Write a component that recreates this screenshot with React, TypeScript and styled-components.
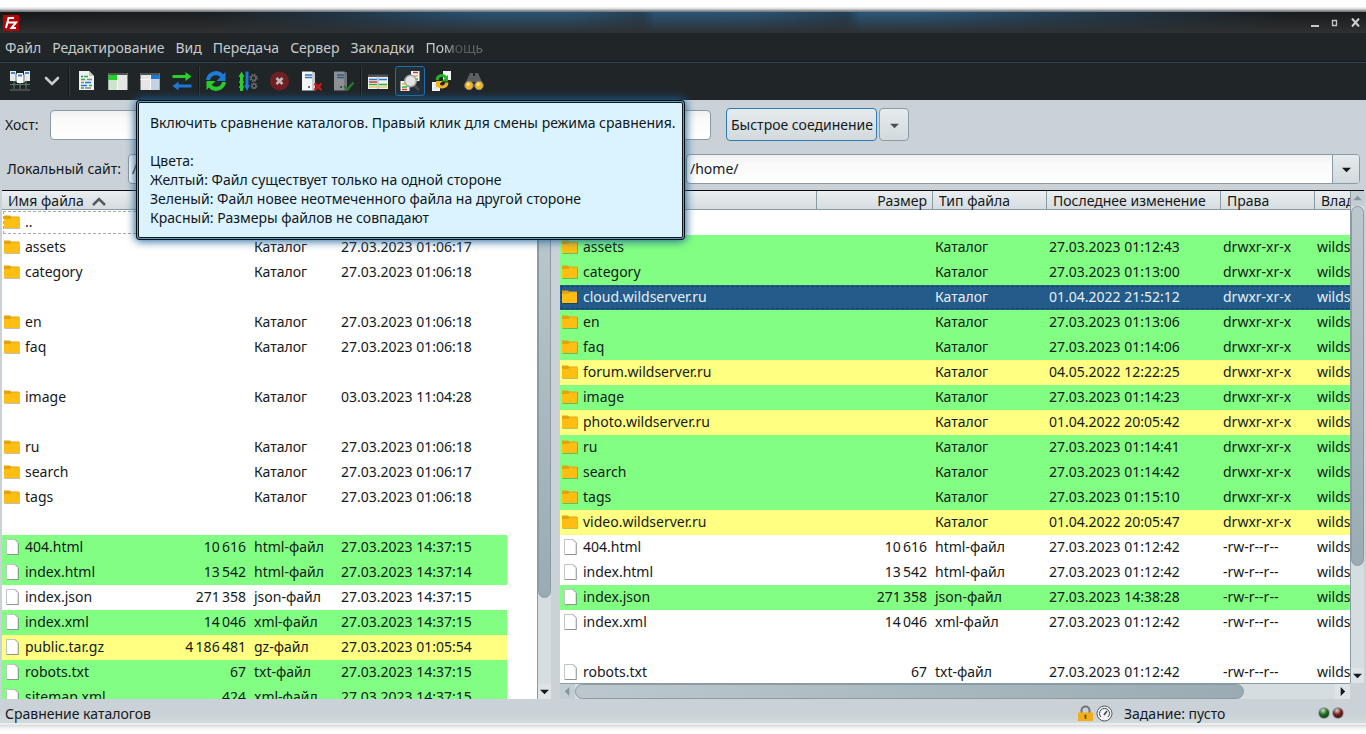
import React from 'react';
import styled, { createGlobalStyle, css } from 'styled-components';

const GlobalStyle = createGlobalStyle`
  *, *::before, *::after { box-sizing: border-box; }
  body {
    margin: 0;
    background: #ffffff;
    color: #14191c;
    font-family: "Noto Sans", "Open Sans", sans-serif;
    font-size: 14px;
    line-height: 19px;
  }
  button, input { font: inherit; color: inherit; margin: 0; }
`;

const edge = '#8a9ba3';
const face = '#cad2d8';

/* ---------- window frame ---------- */

const Window = styled.div`
  display: flex;
  flex-direction: column;
  height: 100vh;
  min-height: 400px;
  overflow: hidden;
  background: ${face};
`;

const TopFade = styled.div`
  flex: none;
  height: 12px;
  background: linear-gradient(#ffffff 0 55%, #d8d8d8 75%, #7c7c7c 92%, #6d8594 100%);
`;

const BottomFade = styled.div`
  flex: none;
  height: 11px;
  background: linear-gradient(#e6eaec 0, #f2f4f5 10%, #d9dcdd 20%, #f2f2f2 45%, #ffffff 75%);
`;

const TitleBar = styled.header`
  flex: none;
  display: flex;
  align-items: center;
  height: 21px;
  padding: 0 3px;
  background:
    linear-gradient(rgba(46, 46, 46, 0), #2e3031),
    linear-gradient(
      to right,
      #161616 0, #1b1e20 15%, #1e3546 25%, #234a68 32%, #285475 36%, #285373 42%, #243f54 47%,
      #28567a 48%, #285475 55%, #223e54 62%, #2a587b 63%, #28567a 68%, #224058 76%, #1d2e3a 85%, #181a1b 95%
    );
`;

const Logo = styled.svg`
  display: block;
`;

const WindowButtons = styled.div`
  display: flex;
  margin-left: auto;
  gap: 4px;
`;

const WindowButton = styled.button`
  display: flex;
  width: 16px;
  height: 16px;
  padding: 0;
  border: 0;
  background: none;
  align-items: center;
  justify-content: center;
`;

const MenuBar = styled.nav`
  flex: none;
  display: flex;
  gap: 11px;
  height: 29px;
  padding: 4px 5px 0;
  background: #202527;
  border-bottom: 1px solid #15191b;
`;

const MenuItem = styled.button<{ $faded?: boolean }>`
  height: 20px;
  padding: 0;
  border: 0;
  background: none;
  color: #c6cbce;
  ${p => p.$faded && css`
    mask-image: linear-gradient(to right, #000 20px, rgba(0, 0, 0, 0.3) 32px, rgba(0, 0, 0, 0.4));
  `}
`;

const ToolBar = styled.div`
  flex: none;
  display: flex;
  align-items: center;
  height: 38px;
  padding: 0 4px 2px;
  background: #202527;
  border-top: 1px solid #33434f;
`;

const ToolSlot = styled.div`
  position: relative;
  width: 32px;
  display: flex;
  justify-content: center;
`;

const ToolButton = styled.button<{ $active?: boolean }>`
  display: flex;
  align-items: center;
  justify-content: center;
  width: 30px;
  height: 30px;
  padding: 0;
  border: 1px solid ${p => (p.$active ? '#1f6fb2' : 'transparent')};
  border-radius: 3px;
  background: ${p => (p.$active ? '#232e35' : 'none')};
`;

const Separator = styled.span`
  width: 2px;
  height: 30px;
  background: linear-gradient(to right, #14181a 50%, #33383b 50%);
`;

const Tooltip = styled.div`
  position: absolute;
  z-index: 5;
  top: 36px;
  left: -256px;
  width: max-content;
  padding: 10px 6px 10px 11px;
  border: 1px solid #11181d;
  border-radius: 2px;
  background: #dbf3ff;
  box-shadow: 0 0 0 1px #5f9cc0, 0 0 0 2px #0a1116, 0 0 10px 3px #1c5f95;
  color: #11181c;
  white-space: pre;
`;

/* ---------- form rows ---------- */

const QuickConnect = styled.form`
  flex: none;
  display: flex;
  align-items: center;
  height: 49px;
  padding-left: 5px;
`;

const Label = styled.label<{ $width?: number }>`
  flex: none;
  width: ${p => (p.$width ? `${p.$width}px` : 'auto')};
`;

const field = css`
  border: 1px solid ${edge};
  border-radius: 4px;
  background: linear-gradient(#f0f0f0, #fafafa 30%, #ffffff);
`;

const TextField = styled.input<{ $width: number }>`
  ${field}
  width: ${p => p.$width}px;
  height: 30px;
  padding: 0 4px;
`;

const PortField = styled(TextField)`
  margin: 0 15px 0 349px;
`;

const ConnectButton = styled.button<{ $primary?: boolean }>`
  height: 33px;
  padding: 0 4px;
  width: ${p => (p.$primary ? '151px' : '30px')};
  border: 1px solid ${p => (p.$primary ? '#2b7cb8' : edge)};
  border-radius: 4px;
  background: linear-gradient(#e6ebed, #d2dadd);
  white-space: nowrap;
`;

const HistoryButton = styled(ConnectButton)`
  margin-left: 2px;
`;

const SiteBars = styled.div`
  flex: none;
  display: grid;
  grid-template-columns: minmax(0, 549fr) 9px minmax(0, 806fr);
  height: 41px;
  padding-left: 2px;
`;

const SiteBar = styled.div`
  display: flex;
  align-items: center;
  gap: 7px;
  padding: 0 6px 2px 5px;
`;

const Combo = styled.div<{ $indent?: boolean }>`
  ${field}
  display: flex;
  flex: 1;
  height: 30px;
  margin-left: ${p => (p.$indent ? '121px' : '0')};
  overflow: hidden;
`;

const ComboInput = styled.input`
  flex: 1;
  min-width: 0;
  padding: 0 3px;
  border: 0;
  background: none;
`;

const ComboButton = styled.button`
  width: 27px;
  padding: 0;
  border: 0;
  border-left: 1px solid ${edge};
  background: linear-gradient(#e6ebed, #d2dadd);
`;

/* ---------- file lists ---------- */

const Panes = styled.main`
  flex: 1;
  min-height: 0;
  display: grid;
  grid-template-columns: minmax(0, 549fr) 9px minmax(0, 806fr);
  padding-left: 2px;
`;

const Pane = styled.section`
  display: flex;
  min-width: 0;
  min-height: 0;
  border-top: 1px solid #080c0e;
`;

const PaneRight = styled(Pane)`
  margin-right: 2px;
`;

const ListColumn = styled.div`
  flex: 1;
  min-width: 0;
  display: flex;
  flex-direction: column;
`;

const ListView = styled.div`
  flex: 1;
  min-height: 0;
  overflow: hidden;
  background: #ffffff;
`;

const Table = styled.table<{ $width: number }>`
  table-layout: fixed;
  width: ${p => p.$width}px;
  border-collapse: separate;
  border-spacing: 0;
  white-space: nowrap;
`;

const HeadCell = styled.th<{ $right?: boolean }>`
  height: 19px;
  padding: 1px 5px 0 6px;
  border-right: 1px solid ${edge};
  border-bottom: 1px solid ${edge};
  background: linear-gradient(#eaeef0, #d5dcdf);
  font-weight: 400;
  line-height: 17px;
  text-align: ${p => (p.$right ? 'right' : 'left')};
`;

const SortMark = styled.svg`
  margin-left: 4px;
`;

type Tone = 'green' | 'yellow' | 'selected' | 'focus' | undefined;

const tones = { green: '#82ff82', yellow: '#ffff82', selected: '#235b8a', focus: '#ffffff' };

const Row = styled.tr<{ $tone?: Tone }>`
  background: ${p => (p.$tone ? tones[p.$tone] : '#ffffff')};
  color: ${p => (p.$tone === 'selected' ? '#e8eef2' : '#14191c')};
  ${p => (p.$tone === 'selected' || p.$tone === 'focus') && css`
    outline: 1px dashed ${p.$tone === 'selected' ? '#174063' : '#a9a9a9'};
    outline-offset: -2px;
  `}
`;

const Cell = styled.td<{ $right?: boolean }>`
  height: 25px;
  padding: 0 6px 2px 2px;
  overflow: hidden;
  text-align: ${p => (p.$right ? 'right' : 'left')};
`;

const NameCell = styled.div`
  display: flex;
  align-items: center;
  gap: 5px;
  height: 23px;
`;

/* ---------- scroll bars ---------- */

const VTrack = styled.div`
  flex: none;
  display: flex;
  flex-direction: column;
  width: 14px;
  border-left: 1px solid ${edge};
  background: #d5dde0;
`;

const HTrack = styled.div`
  flex: none;
  display: flex;
  height: 16px;
  border-top: 1px solid ${edge};
  background: #d5dde0;
`;

const Thumb = styled.div<{ $grow: number; $axis: 'x' | 'y' }>`
  flex: ${p => p.$grow} 1 0;
  border: 1px solid ${edge};
  border-radius: 8px;
  background: linear-gradient(${p => (p.$axis === 'y' ? 'to bottom' : 'to right')}, #bcc8cd, #9aabb3);
`;

const Rest = styled.div<{ $grow: number }>`
  flex: ${p => p.$grow} 1 0;
`;

const ScrollArrow = styled.button<{ $wide?: boolean }>`
  flex: none;
  display: flex;
  align-items: center;
  justify-content: center;
  width: ${p => (p.$wide ? '15px' : '100%')};
  height: 15px;
  padding: 0;
  border: 0;
  background: #dde3e6;
  &:disabled { background: #c3ced2; }
`;

const CornerColumn = styled.div`
  flex: none;
  display: flex;
  flex-direction: column;
  padding-bottom: 16px;
`;

const CornerTrack = styled(VTrack)`
  flex: 1;
`;

/* ---------- status bar ---------- */

const StatusBar = styled.footer`
  flex: none;
  display: flex;
  align-items: center;
  height: 24px;
  padding: 4px 22px 0 5px;
  background: linear-gradient(${face} 60%, #d3dadd);
`;

const StatusRight = styled.div`
  display: flex;
  align-items: center;
  margin-left: auto;
  gap: 2px;
`;

const QueueText = styled.span`
  width: 192px;
  margin-left: 9px;
`;

const Led = styled.span<{ $color: string }>`
  width: 12px;
  height: 12px;
  border-radius: 50%;
  border: 1px solid #9da8ad;
  background: radial-gradient(circle at 40% 25%, #d0dcd0 0, ${p => p.$color} 45%, #0c1a0c 110%);
`;

/* ---------- icons ---------- */

const Svg = ({ children }: { children: React.ReactNode }) => (
  <svg width="20" height="20" viewBox="0 0 20 20" aria-hidden="true">{children}</svg>
);

const SiteManagerIcon = () => (
  <Svg>
    <path d="M0 0h6v10H0zM14 0h6v10h-6z" fill="#e9ecee" />
    <path d="M7 2h6v10H7z" fill="#f8f9fa" />
    <path d="M1 2h4M8 4.500h4M15 2h4" stroke="#3f86d0" strokeWidth="2" />
    <path d="M5 2l2 1v8l-2-1zM13 4l2-1v8l-2 1z" fill="#aeb4b8" />
    <path d="M4 10v8M10 12v6M16 10v8M0 13.500h20M0 19h20" stroke="#6b7276" strokeWidth="1" />
    <path d="M3 12.500h2v2H3zM9 12.500h2v2H9zM15 12.500h2v2h-2z" fill="#2f8f35" />
  </Svg>
);

const ChevronIcon = () => (
  <Svg><path d="M4 7l6 6 6-6" fill="none" stroke="#c9ccce" strokeWidth="2.6" strokeLinecap="round" /></Svg>
);

const LogIcon = () => (
  <Svg>
    <path d="M3 0h10l5 5v14H3z" fill="#f0f0f0" />
    <path d="M13 0v5h5z" fill="#c2c2c2" />
    <path d="M5 5.500h2M9 11.500h6M5 14.500h6" stroke="#1f77d4" strokeWidth="1.300" />
    <path d="M8 5.500h4M5 8.500h4M13 14.500h3M5 17h3" stroke="#2bb030" strokeWidth="1.300" />
    <path d="M11 8.500h5M5 11.500h3M9 17h6" stroke="#85898b" strokeWidth="1.300" />
  </Svg>
);

const TreeIcon = ({ side }: { side: 'left' | 'right' }) => (
  <Svg>
    <path d="M0.500 2h19v17h-19z" fill="#e6e6e6" />
    <path d="M0.500 2h19v2h-19z" fill="#505457" />
    {side === 'left' ? (
      <>
        <path d="M0.500 4h9v5h-9z" fill="#27cf2b" />
        <path d="M0.500 9h9v10h-9z" fill="#cbe6cb" />
        <path d="M9.500 4v15" stroke="#f8f8f8" />
      </>
    ) : (
      <>
        <path d="M11 4h8.500v4H11z" fill="#1f77d4" />
        <path d="M11 8h8.500v11H11z" fill="#c3d3e3" />
        <path d="M0.500 8.500h10M10.500 4v15" stroke="#f8f8f8" />
      </>
    )}
  </Svg>
);

const QueueIcon = () => (
  <Svg>
    <path d="M0.500 4h13V1l6 4.500-6 4.500V7h-13z" fill="#29cf2c" />
    <path d="M19.500 16.500h-13v3l-6-4.500 6-4.500v3h13z" fill="#1f77d4" />
  </Svg>
);

const RefreshIcon = () => (
  <Svg>
    <path d="M2 9a8 8 0 0 1 14-4" fill="none" stroke="#1f7ad8" strokeWidth="4" />
    <path d="M19.500 1v9h-9z" fill="#1f7ad8" />
    <path d="M18 11a8 8 0 0 1-14 4" fill="none" stroke="#2acb2c" strokeWidth="4" />
    <path d="M0.500 19v-9h9z" fill="#2acb2c" />
  </Svg>
);

const ProcessIcon = () => (
  <Svg>
    <path d="M2 20V6H0.500l3-5.500 3 5.500H5v14z" fill="#29cf2c" />
    <path d="M1 11h5M1 16h5" stroke="#29cf2c" strokeWidth="1.500" />
    <path d="M7.500 0.500h3V14H12l-3 6-3-6h1.500z" fill="#1f77d4" />
    <circle cx="15.500" cy="7" r="3" fill="none" stroke="#6a6e70" strokeWidth="2.400" strokeDasharray="1.400 0.956" />
    <circle cx="15.500" cy="7" r="2.300" fill="none" stroke="#6a6e70" />
    <circle cx="16" cy="15" r="2.400" fill="none" stroke="#6a6e70" strokeWidth="2" strokeDasharray="1.200 0.685" />
    <circle cx="16" cy="15" r="1.900" fill="none" stroke="#6a6e70" />
  </Svg>
);

const CancelIcon = () => (
  <Svg>
    <circle cx="9.500" cy="10" r="9.500" fill="#702023" />
    <path d="M6.500 7l6 6M12.500 7l-6 6" stroke="#c2b9ba" strokeWidth="2.500" />
  </Svg>
);

const ServerIcon = ({ state }: { state: 'off' | 'on' }) => (
  <Svg>
    <path d="M0 0.500h10v19H0z" fill={state === 'off' ? '#f5f6f7' : '#8d9194'} />
    <path d="M10 0.500l3 1v18h-3z" fill={state === 'off' ? '#c9cccf' : '#73777a'} />
    <path d="M3 4h7M3 6.500h7" stroke={state === 'off' ? '#2f74c8' : '#335a86'} strokeWidth="1.400" />
    <circle cx="7" cy="16" r="1" fill={state === 'off' ? '#444' : '#303335'} />
    {state === 'off'
      ? <path d="M12.500 12.500l7 6.500M19.500 12.500l-7 6.500" stroke="#c5161b" strokeWidth="2.400" />
      : <path d="M10 15l3.500 3.500 6-7" fill="none" stroke="#257a2c" strokeWidth="2.400" />}
  </Svg>
);

const FilterIcon = () => (
  <Svg>
    <path d="M0 4h20v14H0z" fill="#f1f1f1" />
    <path d="M0 3.500h20V6H0z" fill="#4f5457" />
    <path d="M1 8.500h8M11 8.500h8" stroke="#1f77d4" strokeWidth="1.500" />
    <path d="M1 11h8" stroke="#d5352c" strokeWidth="1.500" />
    <path d="M1 13.500h8M11 13.500h8" stroke="#28b52c" strokeWidth="1.500" />
    <path d="M1 16h8M11 16h8" stroke="#e3b02c" strokeWidth="1.200" />
    <path d="M10 5v13" stroke="#9a9a9a" />
  </Svg>
);

const CompareIcon = () => (
  <Svg>
    <path d="M11 0h8.500v10H11zM0.500 10h9v10h-9z" fill="#f5f5f5" />
    <path d="M13 1.500h5" stroke="#d5352c" strokeWidth="1.500" />
    <path d="M14 5h4M2 13h3" stroke="#e3b02c" strokeWidth="1.500" />
    <path d="M15 8h3M2 16h5" stroke="#28b52c" strokeWidth="1.500" />
    <path d="M2 18.500h5" stroke="#d5352c" strokeWidth="1.500" />
    <path d="M14 14l5 5" stroke="#45494b" strokeWidth="3" />
    <circle cx="10.500" cy="10" r="5.800" fill="#e4e4e4" stroke="#9b9fa1" strokeWidth="1.400" />
  </Svg>
);

const SyncBrowseIcon = () => (
  <Svg>
    <path d="M11 0h8v9h-8zM0 11h8v9H0z" fill="#f5f5f5" />
    <path d="M2 14h3M2 17h4" stroke="#d0d4d6" />
    <path d="M5 9a5 5 0 0 1 9-2.500" fill="none" stroke="#22b427" strokeWidth="3" />
    <path d="M16 4v6.500h-6.500z" fill="#22b427" />
    <path d="M15 11.500a5 5 0 0 1-9 2.500" fill="none" stroke="#f2b31b" strokeWidth="3" />
    <path d="M4 16.500V10h6.500z" fill="#f2b31b" />
  </Svg>
);

const SearchIcon = () => (
  <Svg>
    <path d="M6 2h3v3h2V2h3l5 11-7 4v-6H8v6l-7-4z" fill="#5c5f61" />
    <circle cx="5" cy="14.500" r="4.200" fill="#f2b51d" stroke="#8c8c8c" />
    <circle cx="15" cy="14.500" r="4.200" fill="#f2b51d" stroke="#8c8c8c" />
    <circle cx="4.200" cy="13.500" r="1.400" fill="#ffe39a" /><circle cx="14.200" cy="13.500" r="1.400" fill="#ffe39a" />
  </Svg>
);

const FolderIcon = () => (
  <svg width="16" height="16" viewBox="0 0 16 16" aria-hidden="true">
    <path d="M0.500 14.500h15V3" fill="none" stroke="#000" strokeOpacity="0.250" />
    <path d="M0 1.500h6l1 1h8V14H0z" fill="#e3a30f" />
    <path d="M0 5h6.500l1-1.500H15V14H0z" fill="#ffbf12" />
  </svg>
);

const FileIcon = () => (
  <svg width="16" height="16" viewBox="0 0 16 16" aria-hidden="true">
    <path d="M2.500 0.500h8.500l3 3v12H2.500z" fill="#ffffff" stroke="#c0c5c7" />
    <path d="M14.500 4v11.500H3" fill="none" stroke="#000" strokeOpacity="0.250" />
    <path d="M11 0.500l3 3" stroke="#9ea3a5" fill="none" />
  </svg>
);

const Triangle = ({ dir, color = '#14191c' }: { dir: 'up' | 'down' | 'left' | 'right'; color?: string }) => {
  const d = { up: 'M0 7l5-5 5 5z', down: 'M0 3l5 5 5-5z', left: 'M7 0L2 5l5 5z', right: 'M3 0l5 5-5 5z' }[dir];
  return <svg width="9" height="9" viewBox="0 0 10 10" aria-hidden="true"><path d={d} fill={color} /></svg>;
};

/* ---------- data ---------- */

type Entry = { name: string; kind?: string; size?: string; date?: string; perms?: string; tone?: Tone } | null;

const DIR = 'Каталог';
const dir = (name: string, date: string, tone?: Tone): Entry => ({ name, kind: DIR, date, tone, perms: 'drwxr-xr-x' });
const file = (name: string, size: string, date: string, tone?: Tone): Entry => ({
  name, size, date, tone, perms: '-rw-r--r--', kind: `${name.split('.').pop()}-файл`,
});

const localFiles: Entry[] = [
  { name: '..', tone: 'focus' },
  dir('assets', '27.03.2023 01:06:17'),
  dir('category', '27.03.2023 01:06:18'),
  null,
  dir('en', '27.03.2023 01:06:18'),
  dir('faq', '27.03.2023 01:06:18'),
  null,
  dir('image', '03.03.2023 11:04:28'),
  null,
  dir('ru', '27.03.2023 01:06:18'),
  dir('search', '27.03.2023 01:06:17'),
  dir('tags', '27.03.2023 01:06:18'),
  null,
  file('404.html', '10\u202f616', '27.03.2023 14:37:15', 'green'),
  file('index.html', '13\u202f542', '27.03.2023 14:37:14', 'green'),
  file('index.json', '271\u202f358', '27.03.2023 14:37:15'),
  file('index.xml', '14\u202f046', '27.03.2023 14:37:15', 'green'),
  file('public.tar.gz', '4\u202f186\u202f481', '27.03.2023 01:05:54', 'yellow'),
  file('robots.txt', '67', '27.03.2023 14:37:15', 'green'),
  file('sitemap.xml', '424', '27.03.2023 14:37:15', 'green'),
];

const remoteFiles: Entry[] = [
  null,
  dir('assets', '27.03.2023 01:12:43', 'green'),
  dir('category', '27.03.2023 01:13:00', 'green'),
  dir('cloud.wildserver.ru', '01.04.2022 21:52:12', 'selected'),
  dir('en', '27.03.2023 01:13:06', 'green'),
  dir('faq', '27.03.2023 01:14:06', 'green'),
  dir('forum.wildserver.ru', '04.05.2022 12:22:25', 'yellow'),
  dir('image', '27.03.2023 01:14:23', 'green'),
  dir('photo.wildserver.ru', '01.04.2022 20:05:42', 'yellow'),
  dir('ru', '27.03.2023 01:14:41', 'green'),
  dir('search', '27.03.2023 01:14:42', 'green'),
  dir('tags', '27.03.2023 01:15:10', 'green'),
  dir('video.wildserver.ru', '01.04.2022 20:05:47', 'yellow'),
  file('404.html', '10\u202f616', '27.03.2023 01:12:42'),
  file('index.html', '13\u202f542', '27.03.2023 01:12:42'),
  file('index.json', '271\u202f358', '27.03.2023 14:38:28', 'green'),
  file('index.xml', '14\u202f046', '27.03.2023 01:12:42'),
  null,
  file('robots.txt', '67', '27.03.2023 01:12:42'),
];

const FileRow = ({ entry, remote }: { entry: Entry; remote?: boolean }) => (
  <Row $tone={entry?.tone}>
    <Cell>
      {entry && (
        <NameCell>
          {entry.kind && entry.kind !== DIR ? <FileIcon /> : <FolderIcon />}
          {entry.name}
        </NameCell>
      )}
    </Cell>
    <Cell $right>{entry?.size}</Cell>
    <Cell>{entry?.kind}</Cell>
    <Cell>{entry?.date}</Cell>
    {remote && <Cell>{entry?.perms}</Cell>}
    {remote && <Cell>{entry && 'wildsoft'}</Cell>}
  </Row>
);

const tools = [
  [
    { label: 'Протокол', icon: <LogIcon /> },
    { label: 'Локальное дерево', icon: <TreeIcon side="left" /> },
    { label: 'Удалённое дерево', icon: <TreeIcon side="right" /> },
    { label: 'Очередь', icon: <QueueIcon /> },
  ],
  [
    { label: 'Обновить', icon: <RefreshIcon /> },
    { label: 'Обработать очередь', icon: <ProcessIcon /> },
    { label: 'Отмена', icon: <CancelIcon /> },
    { label: 'Отключиться', icon: <ServerIcon state="off" /> },
    { label: 'Переподключиться', icon: <ServerIcon state="on" /> },
  ],
];

const menus = ['Файл', 'Редактирование', 'Вид', 'Передача', 'Сервер', 'Закладки', 'Помощь'];

const tip = `Включить сравнение каталогов. Правый клик для смены режима сравнения.

Цвета:
Желтый: Файл существует только на одной стороне
Зеленый: Файл новее неотмеченного файла на другой стороне
Красный: Размеры файлов не совпадают`;

const Tool = ({ label, icon }: { label: string; icon: React.ReactNode }) => (
  <ToolSlot><ToolButton type="button" aria-label={label}>{icon}</ToolButton></ToolSlot>
);

export default function App() {
  return (
    <>
      <GlobalStyle />
      <Window>
        <TopFade />
        <TitleBar>
          <Logo width="16" height="16" viewBox="0 0 16 16" aria-hidden="true">
            <path d="M0 0h16v16H0z" fill="#b30505" />
            <path d="M3 13L5.500 3H11M4.500 7.500H9M8.500 7.500h4.500L8.500 13H13" fill="none" stroke="#ffffff" strokeWidth="2" />
          </Logo>
          <WindowButtons>
            <WindowButton aria-label="Свернуть"><svg width="9" height="10"><path d="M0 8h8" stroke="#c8c8c8" strokeWidth="2" /></svg></WindowButton>
            <WindowButton aria-label="Развернуть"><svg width="8" height="8"><path d="M1.500 1.500h4v5h-4z" fill="none" stroke="#c8c8c8" strokeWidth="1.300" /></svg></WindowButton>
            <WindowButton aria-label="Закрыть"><svg width="9" height="9"><path d="M1 0.500l7 8M8 0.500l-7 8" stroke="#d0d0d0" strokeWidth="2" /></svg></WindowButton>
          </WindowButtons>
        </TitleBar>

        <MenuBar>
          {menus.map(m => <MenuItem key={m} type="button" $faded={m === 'Помощь'}>{m}</MenuItem>)}
        </MenuBar>

        <ToolBar role="toolbar">
          <Tool label="Менеджер сайтов" icon={<SiteManagerIcon />} />
          <Tool label="Список сайтов" icon={<ChevronIcon />} />
          {tools.map((group, i) => (
            <React.Fragment key={i}>
              <Separator />
              {group.map(t => <Tool key={t.label} {...t} />)}
            </React.Fragment>
          ))}
          <Separator />
          <Tool label="Фильтры" icon={<FilterIcon />} />
          <ToolSlot>
            <ToolButton type="button" aria-label="Сравнение каталогов" aria-describedby="compare-tip" $active><CompareIcon /></ToolButton>
            <Tooltip id="compare-tip" role="tooltip">{tip}</Tooltip>
          </ToolSlot>
          <Tool label="Синхронный просмотр" icon={<SyncBrowseIcon />} />
          <Tool label="Поиск файлов" icon={<SearchIcon />} />
        </ToolBar>

        <QuickConnect onSubmit={e => e.preventDefault()}>
          <Label htmlFor="host" $width={45}>Хост:</Label>
          <TextField id="host" $width={240} />
          <PortField aria-label="Порт" $width={72} />
          <ConnectButton type="submit" $primary>Быстрое соединение</ConnectButton>
          <HistoryButton type="button" aria-label="История"><Triangle dir="down" color="#4a5154" /></HistoryButton>
        </QuickConnect>

        <SiteBars>
          <SiteBar>
            <Label htmlFor="local">Локальный сайт:</Label>
            <Combo>
              <ComboInput id="local" defaultValue="/" />
              <ComboButton type="button" aria-label="Локальные пути"><Triangle dir="down" /></ComboButton>
            </Combo>
          </SiteBar>
          <span />
          <SiteBar>
            <Combo $indent>
              <ComboInput aria-label="Удаленный сайт" defaultValue="/home/" />
              <ComboButton type="button" aria-label="Удалённые пути"><Triangle dir="down" /></ComboButton>
            </Combo>
          </SiteBar>
        </SiteBars>

        <Panes>
          <Pane>
            <ListColumn>
              <ListView>
                <Table $width={505}>
                  <colgroup><col width="170" /><col width="80" /><col width="87" /><col width="168" /></colgroup>
                  <thead>
                    <tr>
                      <HeadCell scope="col">
                        Имя файла{' '}
                        <SortMark width="14" height="9" viewBox="0 0 14 9" aria-hidden="true">
                          <path d="M1 8l6-6 6 6" fill="none" stroke="#555c60" strokeWidth="2.500" />
                        </SortMark>
                      </HeadCell>
                      <HeadCell scope="col" /><HeadCell scope="col" /><HeadCell scope="col" />
                    </tr>
                  </thead>
                  <tbody>{localFiles.map((e, i) => <FileRow key={i} entry={e} />)}</tbody>
                </Table>
              </ListView>
            </ListColumn>
            <VTrack>
              <ScrollArrow type="button" disabled aria-label="Вверх"><Triangle dir="up" color="#87969e" /></ScrollArrow>
              <Thumb $axis="y" $grow={392} />
              <Rest $grow={86} />
              <ScrollArrow type="button" aria-label="Вниз"><Triangle dir="down" /></ScrollArrow>
            </VTrack>
          </Pane>
          <span />
          <PaneRight>
            <ListColumn>
              <ListView>
                <Table $width={825}>
                  <colgroup><col width="257" /><col width="116" /><col width="114" /><col width="174" /><col width="94" /><col width="70" /></colgroup>
                  <thead>
                    <tr>
                      <HeadCell scope="col" />
                      <HeadCell scope="col" $right>Размер</HeadCell>
                      <HeadCell scope="col">Тип файла</HeadCell>
                      <HeadCell scope="col">Последнее изменение</HeadCell>
                      <HeadCell scope="col">Права</HeadCell>
                      <HeadCell scope="col">Владелец</HeadCell>
                    </tr>
                  </thead>
                  <tbody>{remoteFiles.map((e, i) => <FileRow key={i} entry={e} remote />)}</tbody>
                </Table>
              </ListView>
              <HTrack>
                <ScrollArrow type="button" $wide disabled aria-label="Влево"><Triangle dir="left" color="#87969e" /></ScrollArrow>
                <Thumb $axis="x" $grow={668} />
                <Rest $grow={91} />
                <ScrollArrow type="button" $wide aria-label="Вправо"><Triangle dir="right" /></ScrollArrow>
              </HTrack>
            </ListColumn>
            <CornerColumn>
              <CornerTrack>
                <ScrollArrow type="button" disabled aria-label="Вверх"><Triangle dir="up" color="#87969e" /></ScrollArrow>
                <Thumb $axis="y" $grow={359} />
                <Rest $grow={102} />
                <ScrollArrow type="button" aria-label="Вниз"><Triangle dir="down" /></ScrollArrow>
              </CornerTrack>
            </CornerColumn>
          </PaneRight>
        </Panes>

        <StatusBar>
          Сравнение каталогов
          <StatusRight>
            <svg width="17" height="17" viewBox="0 0 17 17" aria-hidden="true">
              <path d="M4.500 8V5.500a4 4 0 0 1 8 0V8" fill="none" stroke="#6e7376" strokeWidth="2" />
              <path d="M1 7.500h15V16H1z" fill="#efae1a" />
              <path d="M8.500 10v4M7.500 10.500h2" stroke="#6b4a08" strokeWidth="1.600" />
            </svg>
            <svg width="17" height="17" viewBox="0 0 17 17" aria-hidden="true">
              <circle cx="8.500" cy="8.500" r="7.500" fill="#f2f4f5" stroke="#50575a" />
              <path d="M5 12a5 5 0 1 1 7 0" fill="none" stroke="#3e4447" />
              <path d="M8 10l3-4" stroke="#3e4447" strokeWidth="1.500" />
            </svg>
            <QueueText>Задание: пусто</QueueText>
            <Led $color="#1c6a1c" />
            <Led $color="#7c1818" />
          </StatusRight>
        </StatusBar>
        <BottomFade />
      </Window>
    </>
  );
}
